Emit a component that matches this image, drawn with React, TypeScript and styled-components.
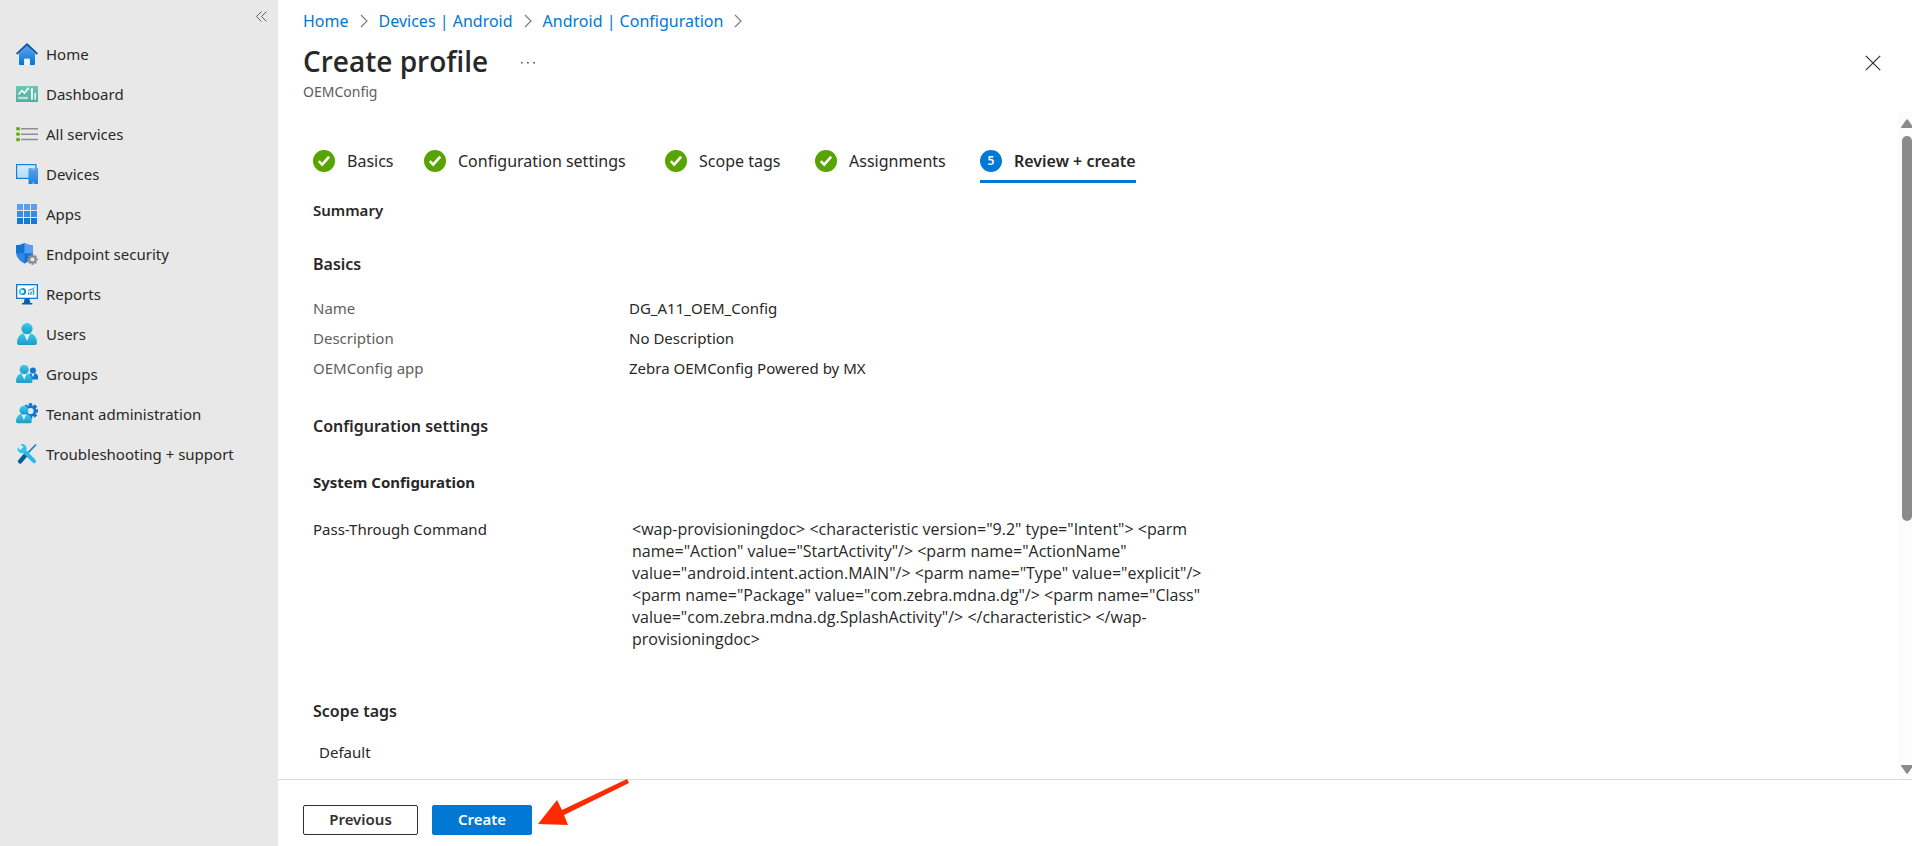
import React from "react";
import styled, { createGlobalStyle } from "styled-components";

const GlobalStyle = createGlobalStyle`
  *, *::before, *::after { box-sizing: border-box; }
  body {
    margin: 0;
    background: #ffffff;
    color: #292827;
    font-family: "Noto Sans", "Open Sans", sans-serif;
    font-size: 15px;
    line-height: 22px;
  }
  button { font-family: inherit; }
  h1, h2, h3, p, ul, ol, dl, dd { margin: 0; padding: 0; }
  ul, ol { list-style: none; }
`;

const Shell = styled.div`
  display: flex;
  height: 100vh;
  overflow: hidden;
`;

const Sidebar = styled.nav`
  flex: 0 0 278px;
  background: #e8e8e8;
`;

const CollapseRow = styled.div`
  display: flex;
  justify-content: flex-end;
  padding: 8px 9px 0 0;
  height: 34px;
`;

const IconButton = styled.button`
  display: flex;
  align-items: center;
  justify-content: center;
  width: ${(p: { $size: number }) => p.$size}px;
  height: ${(p: { $size: number }) => p.$size}px;
  padding: 0;
  border: 0;
  background: transparent;
  color: inherit;
  cursor: pointer;
`;

const NavLink = styled.a`
  display: flex;
  align-items: center;
  gap: 8px;
  height: 40px;
  padding-left: 16px;
  color: #292827;
  text-decoration: none;
  svg { flex: none; }
`;

const Blade = styled.div`
  flex: 1;
  min-width: 0;
  display: flex;
  flex-direction: column;
`;

const Header = styled.header`
  flex: 0 0 112px;
  padding: 9px 0 0 25px;
`;

const Breadcrumb = styled.ol`
  display: flex;
  align-items: center;
  font-size: 16px;
  line-height: 24px;
`;

const Crumb = styled.li`
  display: flex;
  align-items: center;
  a { color: #0078d4; text-decoration: none; }
  svg { margin: 0 11px; }
`;

const TitleRow = styled.div`
  display: flex;
  align-items: center;
  height: 48px;
  padding: 12px 27px 0 0;
`;

const Title = styled.h1`
  font-family: "Open Sans", "Noto Sans", sans-serif;
  font-size: 28px;
  line-height: 40px;
  font-weight: 600;
  margin: 0 26px 4px 0;
`;

const CloseSlot = styled.div`
  margin-left: auto;
`;

const Subtitle = styled.p`
  color: #605e5c;
  font-size: 14px;
  line-height: 22px;
`;

const ScrollArea = styled.div`
  flex: 1;
  min-height: 0;
  display: flex;
`;

const Content = styled.main`
  flex: 1;
  min-width: 0;
  overflow: hidden;
  padding: 30px 0 0 35px;
`;

const Track = styled.div`
  flex: 0 0 14px;
  display: flex;
  flex-direction: column;
  align-items: flex-end;
  padding: 7px 0 5px;
  background: #fcfcfc;
`;

const ThumbSlot = styled.div`
  flex: 1;
  padding: 8px 0;
`;

const Thumb = styled.div`
  width: 10px;
  height: 62%;
  border-radius: 5px;
  background: #8b8b8b;
`;

const Steps = styled.ol`
  display: grid;
  grid-template-columns: 111px 241px 150px 165px max-content;
  font-size: 16px;
`;

const Step = styled.li`
  height: 41px;
  border-bottom: 3px solid ${(p: { $active?: boolean }) => (p.$active ? "#0078d4" : "transparent")};
  font-weight: ${(p) => (p.$active ? 600 : 400)};
`;

const StepButton = styled.button`
  display: flex;
  align-items: center;
  gap: 12px;
  padding: 6px 0 0;
  border: 0;
  background: transparent;
  color: inherit;
  font-size: inherit;
  font-weight: inherit;
  line-height: 26px;
  white-space: nowrap;
  cursor: pointer;
`;

const StepNumber = styled.span`
  width: 22px;
  height: 22px;
  border-radius: 50%;
  background: #0078d4;
  color: #ffffff;
  font-size: 12px;
  line-height: 22px;
  text-align: center;
`;

const Heading = styled.h2`
  font-size: ${(p: { $size: number; $top: number }) => p.$size}px;
  line-height: 24px;
  font-weight: 600;
  margin-top: ${(p) => p.$top}px;
`;

const SubHeading = styled.h3`
  font-size: 15px;
  line-height: 24px;
  font-weight: 700;
  margin-top: 32px;
`;

const Details = styled.dl`
  display: grid;
  grid-template-columns: 316px 1fr;
  margin-top: 17px;
  line-height: 30px;
  dt { color: #605e5c; }
`;

const Setting = styled.dl`
  display: grid;
  grid-template-columns: 319px 1fr;
  margin-top: 24px;
`;

const Command = styled.dd`
  font-family: "Open Sans", "Noto Sans", sans-serif;
  font-size: 16px;
  white-space: pre-line;
`;

const TagName = styled.p`
  margin: 18px 0 0 6px;
`;

const Footer = styled.footer`
  position: relative;
  flex: 0 0 67px;
  display: flex;
  align-items: flex-start;
  gap: 14px;
  padding: 25px 0 0 25px;
  border-top: 1px solid #dadada;
`;

const ActionButton = styled.button`
  width: ${(p: { $width: number; $primary?: boolean }) => p.$width}px;
  height: 30px;
  padding: 0 0 2px;
  border: 1px solid ${(p) => (p.$primary ? "#0078d4" : "#323130")};
  border-radius: 2px;
  background: ${(p) => (p.$primary ? "#0078d4" : "#ffffff")};
  color: ${(p) => (p.$primary ? "#ffffff" : "#323130")};
  font-size: 15px;
  line-height: 20px;
  font-weight: 600;
  cursor: pointer;
`;

const Pointer = styled.svg`
  position: absolute;
  left: 258px;
  top: -2px;
`;

const Chevron = () => (
  <svg width="8" height="14" viewBox="0 0 8 14" fill="none" stroke="#7a7877" strokeWidth="1.1">
    <path d="M1 1l6 6-6 6" />
  </svg>
);

const Check = () => (
  <svg width="22" height="22" viewBox="0 0 22 22">
    <circle cx="11" cy="11" r="11" fill="#57a300" />
    <path d="M5.800 11.200l3.400 3.400 7-8" fill="none" stroke="#fff" strokeWidth="2.600" />
  </svg>
);

const Gradient = ({ id, from, to }: { id: string; from: string; to: string }) => (
  <linearGradient id={id} x1="0" y1="0" x2="0" y2="1">
    <stop offset="0" stopColor={from} />
    <stop offset="1" stopColor={to} />
  </linearGradient>
);

const Icon = ({ children }: { children: React.ReactNode }) => (
  <svg width="22" height="22" viewBox="0 0 22 22" aria-hidden="true">
    {children}
  </svg>
);

const HomeIcon = () => (
  <Icon>
    <defs><Gradient id="home" from="#5ea0ef" to="#0078d4" /></defs>
    <path d="M3 10.500L11 3l8 7.500V21a1 1 0 0 1-1 1h-4.200v-6.200H8.200V22H4a1 1 0 0 1-1-1z" fill="url(#home)" />
    <path d="M8.200 15.800h5.600V22H8.200z" fill="#f2f2f2" />
    <path d="M10.400.5a1 1 0 0 1 1.300 0L22 10.300l-1.200 1.400L11 3 1.200 11.700 0 10.300z" fill="#0f5ba7" />
  </Icon>
);

const DashboardIcon = () => (
  <Icon>
    <defs><Gradient id="dash" from="#6bc8b8" to="#4fae9e" /></defs>
    <path d="M0 3h22v16H0z" fill="url(#dash)" />
    <path d="M2.500 11.500l3.500-4 2.500 2.500L12 5.500" fill="none" stroke="#fff" strokeWidth="1.500" />
    <circle cx="12" cy="5.600" r="1.100" fill="#fff" />
    <path d="M2 13.800h10v2.400H2z" fill="#b5e3da" />
    <path d="M15 5.200h1.800v11.500H15zM18.500 10h1.400v6.700h-1.400z" fill="#fff" />
  </Icon>
);

const ServicesIcon = () => (
  <Icon>
    <path d="M0 4h4v3.500H0zM0 9.400h4v3.400H0zM0 14.800h4v3.500H0z" fill="#86c440" />
    <path d="M1 5h2.200v1.800H1zM1 10.300h2.200v1.800H1zM1 15.700h2.200v1.800H1z" fill="#4f9a10" />
    <path d="M5 5h17v1.500H5zM5 10.400h17v1.500H5zM5 15.800h17v1.500H5z" fill="#8e8e8e" />
  </Icon>
);

const DevicesIcon = () => (
  <Icon>
    <defs>
      <Gradient id="screen" from="#d2ebff" to="#b5dcf8" />
      <Gradient id="phone" from="#5ea0ef" to="#1c83dd" />
    </defs>
    <path d="M0 1h20.500v15H0z" fill="#1480d8" />
    <path d="M1.200 2.200h18.100v12.600H1.200z" fill="url(#screen)" />
    <path d="M12.500 5.200H22V21h-9.500z" fill="url(#phone)" />
    <path d="M16.500 5.800h2v.6h-2zM16.500 19.400h1.800v1h-1.800z" fill="#dceeff" />
  </Icon>
);

const AppsIcon = () => (
  <Icon>
    {[0, 1, 2].map((row) =>
      [0, 1, 2].map((col) => (
        <rect key={`${row}${col}`} x={1 + col * 7} y={1 + row * 7} width="6" height="6"
          fill={["#5b9df0", "#3a8be2", "#0f7bd6"][row]} />
      ))
    )}
  </Icon>
);

const Cog = ({ cx, cy, r, color, hole }: { cx: number; cy: number; r: number; color: string; hole: string }) => (
  <g transform={`translate(${cx} ${cy})`}>
    {[0, 45, 90, 135].map((a) => (
      <rect key={a} x={-r * 0.22} y={-r} width={r * 0.44} height={r * 2} fill={color} transform={`rotate(${a})`} />
    ))}
    <circle r={r * 0.74} fill={color} />
    <circle r={r * 0.4} fill={hole} />
  </g>
);

const SecurityIcon = () => (
  <Icon>
    <path d="M8.500 0C11 1.800 14 2.200 17 2.200V9c0 5.500-4.500 9.500-8.500 11.500C4.500 18.500 0 14.500 0 9V2.200C3 2.200 6 1.800 8.500 0z" fill="#2f87e2" />
    <path d="M8.500 0v10.200H0V2.200C3 2.200 6 1.800 8.500 0z" fill="#1173d2" />
    <path d="M8.500 10.200H17C16.500 15 12.500 18.500 8.500 20.500z" fill="#1274d2" />
    <path d="M8.500 0C11 1.800 14 2.200 17 2.200v8H8.500z" fill="#5a9eee" />
    <Cog cx={16.500} cy={16.500} r={5.300} color="#8c8c8c" hole="#e8e8e8" />
  </Icon>
);

const ReportsIcon = () => (
  <Icon>
    <path d="M0 1h22v15H0z" fill="#0f7ad6" />
    <path d="M1.300 2.300h19.400v12.400H1.300z" fill="#fff" />
    <path d="M8.500 16h5l.8 4h2V21.500H6V20h1.700z" fill="#0b5fa8" />
    <circle cx="6.500" cy="8.500" r="2.700" fill="none" stroke="#32c5ee" strokeWidth="1.700" />
    <path d="M6.500 5.800a2.700 2.700 0 0 1 0 5.400" fill="none" stroke="#1684d8" strokeWidth="1.700" />
    <path d="M12 9.500h1.400v2.300H12zM14.300 8.500h1.400v3.300h-1.400zM16.800 6.500h1.400v5.300h-1.400z" fill="#2294de" />
    <path d="M12 8l3-2 1 .5 2.500-2" fill="none" stroke="#0b5fa8" strokeWidth=".9" />
  </Icon>
);

const Person = ({ fill }: { fill: string }) => (
  <>
    <path d="M6.800 10.500h8.400c3.300 1 5.800 4.500 5.800 9.500a2 2 0 0 1-2 2H3a2 2 0 0 1-2-2c0-5 2.500-8.500 5.800-9.500z" fill={fill} />
    <path d="M8 10.800h6L11 18z" fill="#e8f6fb" />
    <circle cx="11" cy="5.600" r="5.600" fill={fill} />
  </>
);

const UsersIcon = () => (
  <Icon>
    <defs><Gradient id="user" from="#35cdf0" to="#2199c4" /></defs>
    <Person fill="url(#user)" />
  </Icon>
);

const GroupsIcon = () => (
  <Icon>
    <g transform="translate(11 4.500) scale(.54)"><Person fill="#0f78d4" /></g>
    <g transform="translate(-.8 2) scale(.82)"><Person fill="url(#user)" /></g>
  </Icon>
);

const TenantIcon = () => (
  <Icon>
    <Cog cx={14.500} cy={8} r={7.800} color="#0f78d4" hole="#e8e8e8" />
    <g transform="translate(-.8 2.800) scale(.79)"><Person fill="url(#user)" /></g>
  </Icon>
);

const SupportIcon = () => (
  <Icon>
    <path d="M20 1.500L9 13" stroke="#177fc0" strokeWidth="1.800" />
    <path d="M9.200 12.500L4 18.500" stroke="#0c5c9c" strokeWidth="4.200" strokeLinecap="round" />
    <path d="M7 7l11 11.200" stroke="#2bbbe2" strokeWidth="4" strokeLinecap="round" />
    <path d="M4.500 1.200l2.700 2.800-.6 2.300-2.300.6-2.700-2.700C.6 9 5 11.500 8.500 9.500l2-2.300C11.500 3 8 .2 4.500 1.200z" fill="#31c7ec" />
  </Icon>
);

const navItems = [
  { label: "Home", icon: <HomeIcon /> },
  { label: "Dashboard", icon: <DashboardIcon /> },
  { label: "All services", icon: <ServicesIcon /> },
  { label: "Devices", icon: <DevicesIcon /> },
  { label: "Apps", icon: <AppsIcon /> },
  { label: "Endpoint security", icon: <SecurityIcon /> },
  { label: "Reports", icon: <ReportsIcon /> },
  { label: "Users", icon: <UsersIcon /> },
  { label: "Groups", icon: <GroupsIcon /> },
  { label: "Tenant administration", icon: <TenantIcon /> },
  { label: "Troubleshooting + support", icon: <SupportIcon /> },
];

const crumbs = ["Home", "Devices | Android", "Android | Configuration"];
const doneSteps = ["Basics", "Configuration settings", "Scope tags", "Assignments"];

const basics = [
  ["Name", "DG_A11_OEM_Config"],
  ["Description", "No Description"],
  ["OEMConfig app", "Zebra OEMConfig Powered by MX"],
];

const command = `<wap-provisioningdoc> <characteristic version="9.2" type="Intent"> <parm
name="Action" value="StartActivity"/> <parm name="ActionName"
value="android.intent.action.MAIN"/> <parm name="Type" value="explicit"/>
<parm name="Package" value="com.zebra.mdna.dg"/> <parm name="Class"
value="com.zebra.mdna.dg.SplashActivity"/> </characteristic> </wap-
provisioningdoc>`;

export default function App() {
  return (
    <>
      <GlobalStyle />
      <Shell>
        <Sidebar aria-label="Main">
          <CollapseRow>
            <IconButton $size={16} aria-label="Collapse menu">
              <svg width="11" height="11" viewBox="0 0 11 11" fill="none" stroke="#605e5c">
                <path d="M5.500.5l-5 5 5 5M10.500.5l-5 5 5 5" />
              </svg>
            </IconButton>
          </CollapseRow>
          <ul>
            {navItems.map((item) => (
              <li key={item.label}>
                <NavLink href="#">
                  {item.icon}
                  {item.label}
                </NavLink>
              </li>
            ))}
          </ul>
        </Sidebar>
        <Blade>
          <Header>
            <Breadcrumb>
              {crumbs.map((crumb) => (
                <Crumb key={crumb}>
                  <a href="#">{crumb}</a>
                  <Chevron />
                </Crumb>
              ))}
            </Breadcrumb>
            <TitleRow>
              <Title>Create profile</Title>
              <IconButton $size={28} aria-label="More actions">
                <svg width="14" height="2" viewBox="0 0 14 2" fill="#484644">
                  <path d="M0 0h1.500v1.500H0zM6.200 0h1.500v1.500H6.200zM12.400 0h1.500v1.500h-1.500z" />
                </svg>
              </IconButton>
              <CloseSlot>
                <IconButton $size={24} aria-label="Close">
                  <svg width="16" height="16" viewBox="0 0 16 16" stroke="#323130" strokeWidth="1.200">
                    <path d="M.8.8l14.400 14.400M15.200.8L.8 15.200" />
                  </svg>
                </IconButton>
              </CloseSlot>
            </TitleRow>
            <Subtitle>OEMConfig</Subtitle>
          </Header>
          <ScrollArea>
            <Content>
              <Steps>
                {doneSteps.map((step) => (
                  <Step key={step}>
                    <StepButton><Check />{step}</StepButton>
                  </Step>
                ))}
                <Step $active>
                  <StepButton aria-current="step"><StepNumber>5</StepNumber>Review + create</StepButton>
                </Step>
              </Steps>
              <Heading $size={15} $top={15}>Summary</Heading>
              <Heading $size={16} $top={30}>Basics</Heading>
              <Details>
                {basics.map(([term, value]) => (
                  <React.Fragment key={term}>
                    <dt>{term}</dt>
                    <dd>{value}</dd>
                  </React.Fragment>
                ))}
              </Details>
              <Heading $size={16} $top={31}>Configuration settings</Heading>
              <SubHeading>System Configuration</SubHeading>
              <Setting>
                <dt>Pass-Through Command</dt>
                <Command>{command}</Command>
              </Setting>
              <Heading $size={16} $top={49}>Scope tags</Heading>
              <TagName>Default</TagName>
            </Content>
            <Track aria-hidden="true">
              <svg width="11" height="9" viewBox="0 0 11 9"><path d="M0 8.200L5.200.8q.9-1 1.800 0l4 5.700V9H.6Q-.2 9 0 8.200z" fill="#8b8b8b" /></svg>
              <ThumbSlot><Thumb /></ThumbSlot>
              <svg width="11" height="9" viewBox="0 0 11 9"><path d="M0 .8L5.200 8.200q.9 1 1.800 0l4-5.700V0H.6Q-.2 0 0 .8z" fill="#8b8b8b" /></svg>
            </Track>
          </ScrollArea>
          <Footer>
            <ActionButton $width={115}>Previous</ActionButton>
            <ActionButton $width={100} $primary>Create</ActionButton>
            <Pointer width="94" height="50" viewBox="0 0 94 50" aria-hidden="true">
              <path d="M2 46L21 22l5 10L91 1l2 4L28 37l4 10z" fill="#ff2a00" />
            </Pointer>
          </Footer>
        </Blade>
      </Shell>
    </>
  );
}
